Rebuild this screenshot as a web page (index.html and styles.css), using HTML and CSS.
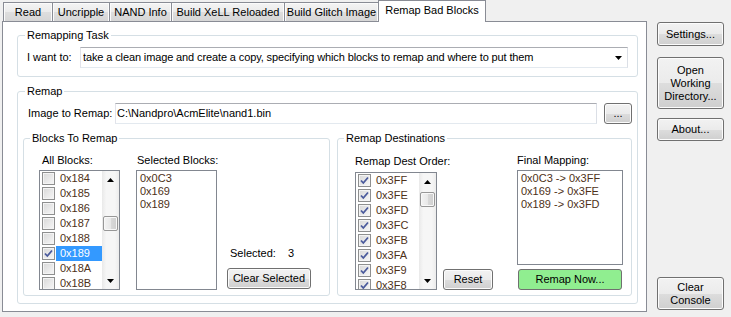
FILE: index.html
```html
<!DOCTYPE html>
<html>
<head>
<meta charset="utf-8">
<title>Remap Bad Blocks</title>
<link rel="stylesheet" href="styles.css">
</head>
<body>
<div class="window">
  <div class="tabctl">
    <div class="tabstrip">
      <div class="tab t-read">Read</div>
      <div class="tab t-unc">Uncripple</div>
      <div class="tab t-nand">NAND Info</div>
      <div class="tab t-xell">Build XeLL Reloaded</div>
      <div class="tab t-glitch">Build Glitch Image</div>
      <div class="tab active">Remap Bad Blocks</div>
    </div>
    <div class="page">
      <fieldset class="group task">
        <legend>Remapping Task</legend>
        <div class="task-row">
          <span class="lbl want">I want to:</span>
          <div class="combo">
            <span class="combo-text">take a clean image and create a copy, specifying which blocks to remap and where to put them</span>
            <svg class="combo-arrow" width="7" height="4" viewBox="0 0 7 4"><path d="M0 0H7L3.5 4Z" fill="#000"/></svg>
          </div>
        </div>
      </fieldset>

      <fieldset class="group remap">
        <legend>Remap</legend>
        <div class="image-row">
          <span class="lbl img-lbl">Image to Remap:</span>
          <div class="textbox">C:\Nandpro\AcmElite\nand1.bin</div>
          <div class="btn browse">...</div>
        </div>
        <div class="subgroups">
          <fieldset class="group blocks">
            <legend>Blocks To Remap</legend>
            <div class="blocks-body">
              <div class="col all-col">
                <span class="lbl col-lbl all-lbl">All Blocks:</span>
                <div class="clist all-list">
                  <div class="clist-items">
                    <div class="citem"><span class="cb"></span><span class="ctext">0x184</span></div>
                    <div class="citem"><span class="cb"></span><span class="ctext">0x185</span></div>
                    <div class="citem"><span class="cb"></span><span class="ctext">0x186</span></div>
                    <div class="citem"><span class="cb"></span><span class="ctext">0x187</span></div>
                    <div class="citem"><span class="cb"></span><span class="ctext">0x188</span></div>
                    <div class="citem sel"><span class="cb checked"><svg width="11" height="11" viewBox="0 0 11 11"><path d="M2 5.5L4.3 8L9 2.5" fill="none" stroke="#4a5a9c" stroke-width="1.8"/></svg></span><span class="ctext">0x189</span></div>
                    <div class="citem"><span class="cb"></span><span class="ctext">0x18A</span></div>
                    <div class="citem"><span class="cb"></span><span class="ctext">0x18B</span></div>
                  </div>
                  <div class="vscroll">
                    <div class="sb-btn"><svg width="7" height="4" viewBox="0 0 7 4"><path d="M0 4H7L3.5 0Z" fill="#000"/></svg></div>
                    <div class="sb-track"><div class="sb-thumb thumb-all"></div></div>
                    <div class="sb-btn"><svg width="7" height="4" viewBox="0 0 7 4"><path d="M0 0H7L3.5 4Z" fill="#000"/></svg></div>
                  </div>
                </div>
              </div>
              <div class="col sel-col">
                <span class="lbl col-lbl sel-lbl">Selected Blocks:</span>
                <div class="list sel-list">
                  <div class="litem">0x0C3</div>
                  <div class="litem">0x169</div>
                  <div class="litem">0x189</div>
                </div>
              </div>
              <div class="col count-col">
                <div class="count"><span class="count-lbl">Selected:</span><span>3</span></div>
                <div class="btn clear-sel">Clear Selected</div>
              </div>
            </div>
          </fieldset>

          <fieldset class="group dest">
            <legend>Remap Destinations</legend>
            <div class="dest-body">
              <div class="col order-col">
                <span class="lbl order-lbl">Remap Dest Order:</span>
                <div class="clist order-list">
                  <div class="clist-items">
                    <div class="citem"><span class="cb checked"><svg width="11" height="11" viewBox="0 0 11 11"><path d="M2 5.5L4.3 8L9 2.5" fill="none" stroke="#4a5a9c" stroke-width="1.8"/></svg></span><span class="ctext">0x3FF</span></div>
                    <div class="citem"><span class="cb checked"><svg width="11" height="11" viewBox="0 0 11 11"><path d="M2 5.5L4.3 8L9 2.5" fill="none" stroke="#4a5a9c" stroke-width="1.8"/></svg></span><span class="ctext">0x3FE</span></div>
                    <div class="citem"><span class="cb checked"><svg width="11" height="11" viewBox="0 0 11 11"><path d="M2 5.5L4.3 8L9 2.5" fill="none" stroke="#4a5a9c" stroke-width="1.8"/></svg></span><span class="ctext">0x3FD</span></div>
                    <div class="citem"><span class="cb checked"><svg width="11" height="11" viewBox="0 0 11 11"><path d="M2 5.5L4.3 8L9 2.5" fill="none" stroke="#4a5a9c" stroke-width="1.8"/></svg></span><span class="ctext">0x3FC</span></div>
                    <div class="citem"><span class="cb checked"><svg width="11" height="11" viewBox="0 0 11 11"><path d="M2 5.5L4.3 8L9 2.5" fill="none" stroke="#4a5a9c" stroke-width="1.8"/></svg></span><span class="ctext">0x3FB</span></div>
                    <div class="citem"><span class="cb checked"><svg width="11" height="11" viewBox="0 0 11 11"><path d="M2 5.5L4.3 8L9 2.5" fill="none" stroke="#4a5a9c" stroke-width="1.8"/></svg></span><span class="ctext">0x3FA</span></div>
                    <div class="citem"><span class="cb checked"><svg width="11" height="11" viewBox="0 0 11 11"><path d="M2 5.5L4.3 8L9 2.5" fill="none" stroke="#4a5a9c" stroke-width="1.8"/></svg></span><span class="ctext">0x3F9</span></div>
                    <div class="citem"><span class="cb checked"><svg width="11" height="11" viewBox="0 0 11 11"><path d="M2 5.5L4.3 8L9 2.5" fill="none" stroke="#4a5a9c" stroke-width="1.8"/></svg></span><span class="ctext">0x3F8</span></div>
                  </div>
                  <div class="vscroll">
                    <div class="sb-btn"><svg width="7" height="4" viewBox="0 0 7 4"><path d="M0 4H7L3.5 0Z" fill="#000"/></svg></div>
                    <div class="sb-track"><div class="sb-thumb thumb-order"></div></div>
                    <div class="sb-btn"><svg width="7" height="4" viewBox="0 0 7 4"><path d="M0 0H7L3.5 4Z" fill="#000"/></svg></div>
                  </div>
                </div>
              </div>
              <div class="btn reset">Reset</div>
              <div class="col final-col">
                <span class="lbl final-lbl">Final Mapping:</span>
                <div class="list final-list">
                  <div class="litem">0x0C3 -&gt; 0x3FF</div>
                  <div class="litem">0x169 -&gt; 0x3FE</div>
                  <div class="litem">0x189 -&gt; 0x3FD</div>
                </div>
                <div class="btn go">Remap Now...</div>
              </div>
            </div>
          </fieldset>
        </div>
      </fieldset>
    </div>
  </div>

  <div class="side">
    <div class="btn settings">Settings...</div>
    <div class="btn open">Open<br>Working<br>Directory...</div>
    <div class="btn about">About...</div>
    <div class="btn console">Clear<br>Console</div>
  </div>
</div>
</body>
</html>
```

FILE: styles.css
```css
* { box-sizing: border-box; }
html, body { margin: 0; padding: 0; }
body {
  width: 731px;
  height: 317px;
  overflow: hidden;
  background: #f0f0f0;
  font-family: "Liberation Sans", Arial, sans-serif;
  font-size: 11px;
  line-height: 13px;
  color: #000;
}
.window { display: flex; height: 317px; padding-left: 2px; }

/* tabs */
.tabctl { width: 645px; display: flex; flex-direction: column; }
.tabstrip { display: flex; align-items: flex-end; height: 21px; padding-left: 1px; }
.tab {
  height: 19px;
  border: 1px solid #898c95;
  border-bottom: none;
  margin-left: -1px;
  background: linear-gradient(#f4f4f4, #ebebeb 50%, #dedede 51%, #d6d6d6);
  box-shadow: inset 1px 1px 0 #fbfbfb, inset -1px 0 0 #fbfbfb;
  display: flex;
  align-items: center;
  justify-content: center;
  padding-top: 1px;
  white-space: nowrap;
}
.tab:first-child { margin-left: 0; }
.t-read { width: 50px; }
.t-unc { width: 58px; }
.t-nand { width: 63px; }
.t-xell { width: 114px; }
.t-glitch { width: 95px; }
.tab.active {
  width: 108px;
  height: 22px;
  margin-bottom: -1px;
  background: #fff;
  box-shadow: none;
  position: relative;
  z-index: 1;
  align-items: flex-start;
  padding-top: 3px;
}
.page {
  height: 291px;
  border: 1px solid #898c95;
  background: #fff;
  padding: 7px 8px 0 14px;
}

/* group boxes */
.group {
  margin: 0;
  padding: 0;
  border: 1px solid #d5dfe5;
  border-radius: 3px;
  min-width: 0;
}
.group > legend { padding: 0 2px; line-height: 13px; }
.task { height: 48px; padding: 0 9px; }
.task > legend { margin-left: -2px; }
.task-row { display: flex; align-items: center; margin-top: 5px; }
.want { width: 53px; flex: none; }
.combo {
  flex: 1;
  height: 21px;
  border: 1px solid #abadb3;
  border-color: #abadb3 #dbdfe6 #e3e9ef #e2e3ea;
  display: flex;
  align-items: center;
  padding: 0 5px 0 2px;
  background: #fff;
}
.combo-text { flex: 1; white-space: nowrap; overflow: hidden; letter-spacing: -0.12px; }
.combo-arrow { flex: none; margin-left: 4px; }

.remap { height: 219px; margin-top: 8px; padding: 0 5px; }
.remap > legend { margin-left: 2px; }
.image-row { display: flex; align-items: center; margin-top: 5px; }
.img-lbl { width: 87px; margin-left: 5px; flex: none; }
.textbox {
  flex: 1;
  height: 21px;
  border: 1px solid #abadb3;
  border-color: #abadb3 #dbdfe6 #e3e9ef #e2e3ea;
  padding: 3px 0 0 1px;
  white-space: nowrap;
}
.browse { width: 28px; height: 21px; margin-left: 7px; flex: none; }

.subgroups { display: flex; gap: 7px; margin-top: 8px; }
.blocks { width: 307px; height: 164px; padding: 0 0 0 15px; }
.blocks > legend { margin-left: -9px; }
.dest { width: 295px; height: 164px; padding: 0 0 0 17px; }
.dest > legend { margin-left: -11px; }

.blocks-body, .dest-body { display: flex; }
.col { display: flex; flex-direction: column; }
.lbl { white-space: nowrap; }

.all-col { width: 81px; }
.sel-col { width: 81px; margin-left: 16px; }
.count-col { width: 84px; margin-left: 10px; justify-content: flex-end; }
.col-lbl { margin-top: 9px; height: 13px; }
.all-lbl { padding-left: 3px; }
.sel-lbl { padding-left: 1px; }
.all-list { margin-top: 3px; height: 120px; }
.sel-list { margin-top: 3px; height: 120px; }
.count { display: flex; padding-left: 3px; }
.count-lbl { width: 58px; }
.clear-sel { height: 21px; margin-top: 8px; margin-bottom: 1px; }

.order-col { width: 82px; }
.order-lbl { margin-top: 10px; height: 13px; }
.order-list { margin-top: 4px; height: 118px; }
.reset { width: 50px; height: 21px; margin-left: 6px; align-self: flex-end; }
.final-col { width: 106px; margin-left: 24px; }
.final-lbl { margin-top: 9px; height: 13px; }
.final-list { margin-top: 3px; height: 95px; }
.go {
  height: 21px;
  margin: 4px 1px 0;
  background: #90ee90;
  box-shadow: none;
  border-color: #7a8a7a;
}

/* lists */
.list, .clist {
  border: 1px solid #828790;
  background: #fff;
  overflow: hidden;
  color: #4e3118;
}
.list { padding-top: 1px; }
.litem { height: 13px; line-height: 13px; padding-left: 3px; white-space: nowrap; }
.clist { display: flex; }
.clist-items { flex: 1; overflow: hidden; }
.citem { height: 15px; display: flex; align-items: center; padding-left: 2px; }
.cb {
  width: 13px;
  height: 13px;
  flex: none;
  border: 1px solid #8e8f8f;
  background: linear-gradient(135deg, #d8d8d8, #f7f7f7);
  box-shadow: inset 0 0 0 1px #f4f4f4;
  display: flex;
  align-items: center;
  justify-content: center;
}
.ctext {
  flex: 1;
  height: 15px;
  line-height: 15px;
  margin-left: 1px;
  padding-left: 4px;
  white-space: nowrap;
}
.citem.sel .ctext { background: #3399ff; color: #fff; }

.vscroll {
  width: 17px;
  flex: none;
  display: flex;
  flex-direction: column;
  background: linear-gradient(to right, #e9e9e9, #f6f6f6 25%, #f6f6f6 75%, #ececec);
}
.sb-btn { height: 17px; flex: none; display: flex; align-items: center; justify-content: center; padding-top: 1px; }
.sb-track { flex: 1; }
.sb-thumb {
  height: 15px;
  margin: 0 1px;
  border: 1px solid #979797;
  border-radius: 2px;
  background: linear-gradient(to right, #f3f3f3, #e8e8e8 50%, #d9d9d9 51%, #cfcfcf);
  box-shadow: inset 0 0 0 1px #f8f8f8;
}
.thumb-all { margin-top: 28px; }
.thumb-order { margin-top: 2px; }

/* buttons */
.btn {
  border: 1px solid #707070;
  border-radius: 3px;
  background: linear-gradient(#f2f2f2, #ebebeb 50%, #dddddd 51%, #cfcfcf);
  box-shadow: inset 0 0 0 1px #fcfcfc;
  display: flex;
  align-items: center;
  justify-content: center;
  text-align: center;
  white-space: nowrap;
  color: #000;
}
.go { background: #90ee90; box-shadow: none; }

.side {
  width: 67px;
  margin-left: 10px;
  display: flex;
  flex-direction: column;
  padding: 22px 0 7px;
}
.settings { height: 24px; }
.open { height: 52px; margin-top: 11px; }
.about { height: 23px; margin-top: 9px; }
.console { height: 33px; margin-top: auto; }
```
